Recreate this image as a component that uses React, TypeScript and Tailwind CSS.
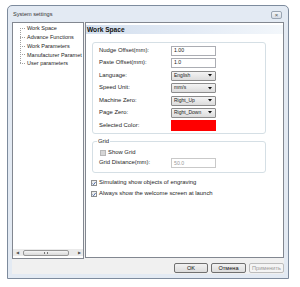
import React from "react";

const label = "text-[5.9px] leading-none text-[#1e1e1e] whitespace-nowrap";

function Check({ checked, disabled }: { checked?: boolean; disabled?: boolean }) {
  return (
    <span
      className={
        "flex h-[6px] w-[6px] shrink-0 items-center justify-center border " +
        (disabled ? "border-[#b8b8b8] bg-[#d6d6d6]" : "border-[#8e8f8f] bg-gradient-to-br from-[#e6e6e6] to-white")
      }
    >
      {checked && (
        <svg width="5" height="5" viewBox="0 0 5 5">
          <path d="M0.6 2.6 L2 4 L4.5 0.6" stroke="#3d5d9c" strokeWidth="1.1" fill="none" />
        </svg>
      )}
    </span>
  );
}

function Field({ value, disabled }: { value: string; disabled?: boolean }) {
  return (
    <div
      className={
        "flex h-[10px] w-[45px] items-center border px-[2px] text-[5.2px] " +
        (disabled ? "border-[#c9c9c9] bg-white text-[#9a9a9a]" : "border-[#abadb3] bg-white text-[#222]")
      }
    >
      {value}
    </div>
  );
}

function Select({ value }: { value: string }) {
  return (
    <div className="flex h-[10px] w-[45px] items-center justify-between rounded-[1px] border border-[#8c8c8c] bg-gradient-to-b from-[#f4f4f4] to-[#dcdcdc] pl-[2px] pr-[3px] text-[5px] text-[#222]">
      <span className="whitespace-nowrap">{value}</span>
      <svg width="4" height="3" viewBox="0 0 4 3" className="shrink-0">
        <path d="M0 0 H4 L2 2.5 Z" fill="#111" />
      </svg>
    </div>
  );
}

const tree = ["Work Space", "Advance Functions", "Work Parameters", "Manufacturer Paramet", "User parameters"];

const rows: { label: string; el: React.ReactNode }[] = [
  { label: "Nudge Offset(mm):", el: <Field value="1.00" /> },
  { label: "Paste Offset(mm):", el: <Field value="1.0" /> },
  { label: "Language:", el: <Select value="English" /> },
  { label: "Speed Unit:", el: <Select value="mm/s" /> },
  { label: "Machine Zero:", el: <Select value="Right_Up" /> },
  { label: "Page Zero:", el: <Select value="Right_Down" /> },
];

export default function App() {
  return (
    <div className="h-[287px] w-[300px] bg-white pl-[7px] pt-[5px] font-['Liberation_Sans',Arial,sans-serif]">
      <div className="flex h-[274px] w-[282px] flex-col rounded-t-[5px] border border-[#7d8b9d] bg-[#e3eaf3] px-[4px] pb-[4px]">
        <div className="flex h-[16px] items-center justify-between pl-[1px] pr-[2px]">
          <span className="text-[5.6px] text-[#333]">System settings</span>
          <div className="mt-[2px] flex h-[8px] w-[11px] items-center justify-center rounded-[2px] border border-[#9aa5b3] bg-gradient-to-b from-[#f2f4f7] to-[#d7dde6] text-[6px] leading-none text-[#555]">
            ×
          </div>
        </div>
        <div className="flex flex-1 flex-col bg-[#f0f0f0]">
          <div className="flex gap-[1px]">
            {/* tree */}
            <div className="flex h-[237px] w-[72px] flex-col justify-between overflow-hidden border border-[#828790] bg-white">
              <div className="relative pl-[14px] pt-[1px]">
                <div className="absolute left-[7px] top-[5px] h-[35px] border-l border-dotted border-[#a0a0a0]" />
                {tree.map((t) => (
                  <div key={t} className="relative flex h-[8.75px] items-center whitespace-nowrap text-[5.5px] text-[#1e1e1e]">
                    <span className="absolute left-[-7px] top-[4px] w-[5px] border-t border-dotted border-[#a0a0a0]" />
                    {t}
                  </div>
                ))}
              </div>
              <div className="mb-[2px] flex h-[7px] items-center bg-[#eaeaea] px-[1px]">
                <span className="w-[6px] text-center text-[4px] leading-none text-[#555]">◀</span>
                <div className="ml-[3px] flex h-[6px] w-[46px] items-center justify-center rounded-[2px] border border-[#979797] bg-gradient-to-b from-[#f5f5f5] to-[#d9d9d9]">
                  <span className="h-[2px] w-[4px] border-x border-[#777]" />
                </div>
                <span className="ml-auto w-[6px] text-center text-[4px] leading-none text-[#555]">▶</span>
              </div>
            </div>
            {/* right panel */}
            <div className="flex h-[236px] flex-1 flex-col border border-[#828790] bg-white">
              <div className="mt-[2px] flex h-[9px] items-center bg-gradient-to-r from-[#d3dfee] via-[#e2eaf5] to-[#f3f7fb] pl-[1px] text-[6.6px] font-bold text-[#111]">
                Work Space
              </div>
              <fieldset className="ml-[6px] mt-[8px] flex h-[92px] w-[174px] flex-col gap-[2.4px] rounded-[3px] border border-[#d5dfe5] pl-[6px] pt-[3px]">
                {rows.map((r) => (
                  <div key={r.label} className="flex h-[10px] items-center">
                    <span className={"w-[72px] " + label}>{r.label}</span>
                    {r.el}
                  </div>
                ))}
                <div className="flex h-[11px] items-center">
                  <span className={"w-[72px] " + label}>Selected Color:</span>
                  <div className="h-[11px] w-[45px] bg-[#ff0000]" />
                </div>
              </fieldset>
              <fieldset className="ml-[6px] mt-[5px] h-[34px] w-[174px] rounded-[3px] border border-[#d5dfe5] pl-[6px]">
                <legend className="ml-[-2px] px-[1px] text-[5.9px] leading-none text-[#1e1e1e]">Grid</legend>
                <div className="mt-[4px] flex h-[8px] items-center gap-[2px] pl-[1px]">
                  <Check disabled />
                  <span className={label}>Show Grid</span>
                </div>
                <div className="mt-[1px] flex h-[11px] items-center">
                  <span className={"w-[72px] " + label}>Grid Distance(mm):</span>
                  <Field value="50.0" disabled />
                </div>
              </fieldset>
              <div className="ml-[5px] mt-[7px] flex flex-col gap-[5px]">
                <div className="flex items-center gap-[2px]">
                  <Check checked />
                  <span className={label}>Simulating show objects of engraving</span>
                </div>
                <div className="flex items-center gap-[2px]">
                  <Check checked />
                  <span className={label}>Always show the welcome screen at launch</span>
                </div>
              </div>
            </div>
          </div>
          <div className="mt-[4px] flex h-[10px] justify-end gap-[3px]">
            <button className="w-[34px] rounded-[2px] border border-[#707070] bg-gradient-to-b from-[#f2f2f2] to-[#dcdcdc] text-[5.6px] text-[#111]">
              OK
            </button>
            <button className="w-[35px] rounded-[2px] border border-[#707070] bg-gradient-to-b from-[#f2f2f2] to-[#dcdcdc] text-[5.6px] text-[#111]">
              Отмена
            </button>
            <button className="w-[35px] rounded-[2px] border border-[#bcbcbc] bg-[#f4f4f4] text-[5.6px] text-[#9a9a9a]">
              Применить
            </button>
          </div>
        </div>
      </div>
    </div>
  );
}
